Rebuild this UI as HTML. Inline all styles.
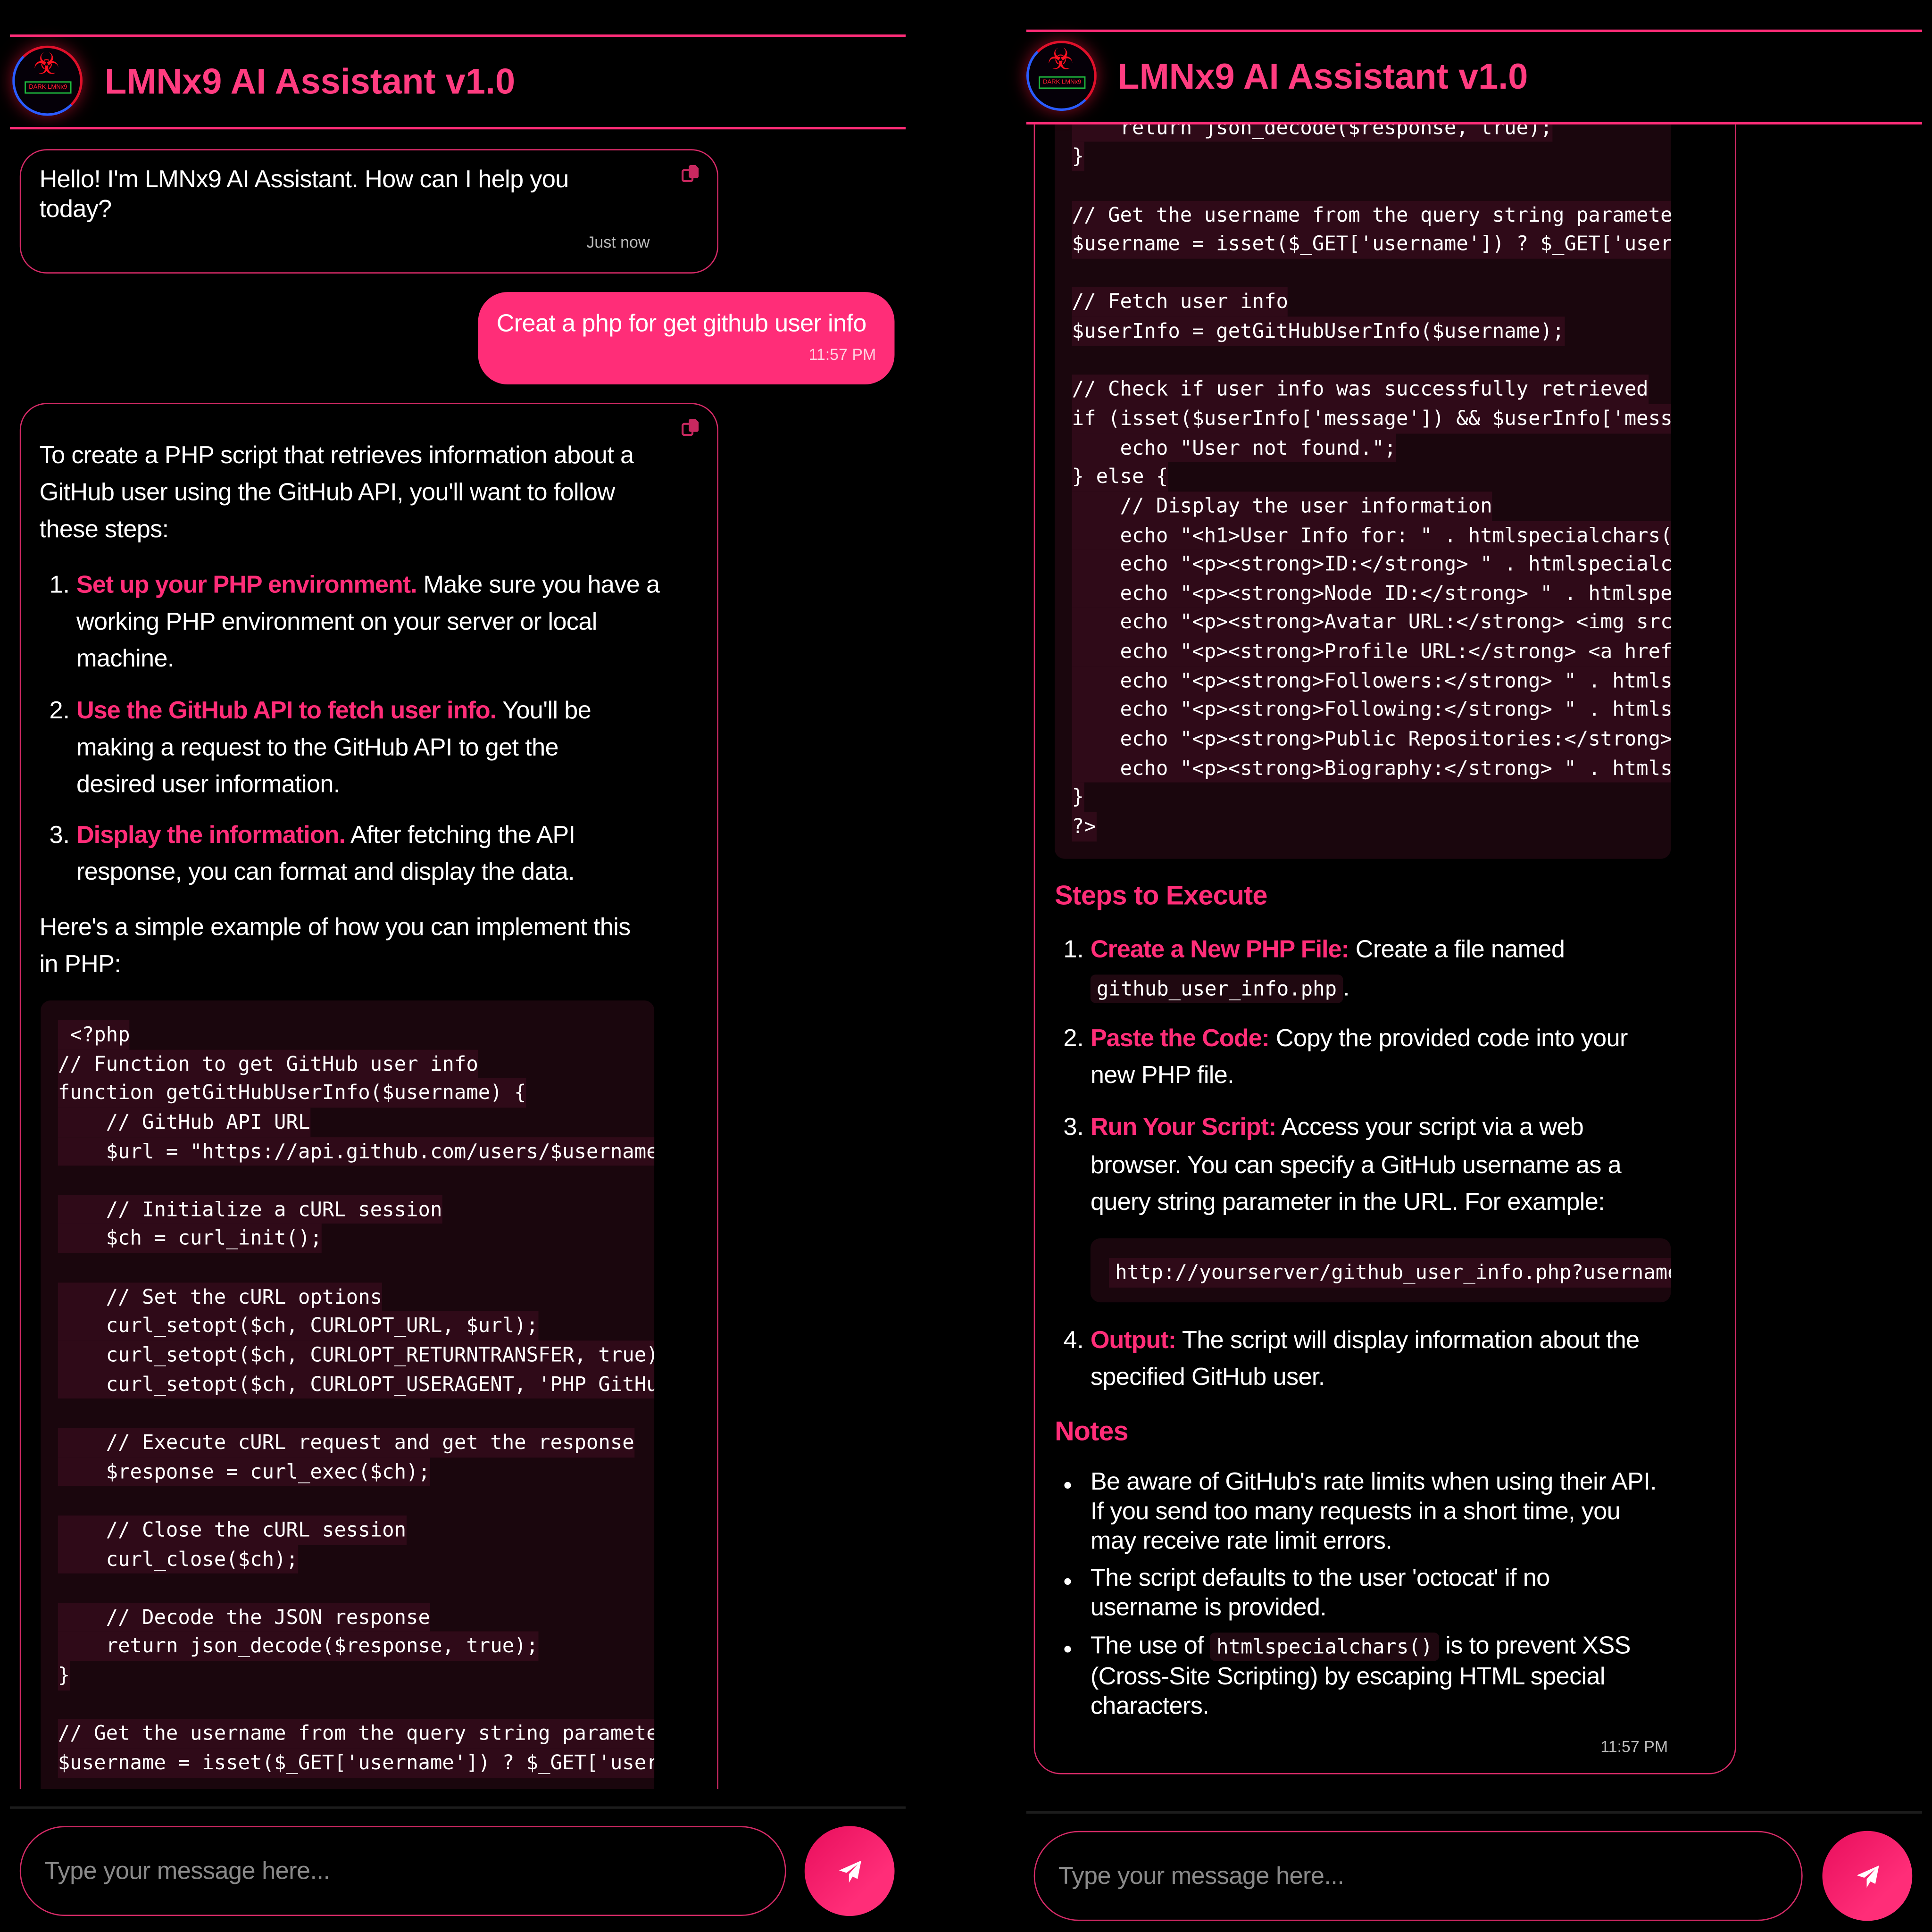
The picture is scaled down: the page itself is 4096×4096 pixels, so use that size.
<!DOCTYPE html>
<html><head><meta charset="utf-8">
<style>
*{margin:0;padding:0;box-sizing:border-box}
html,body{width:4096px;height:4096px;overflow:hidden;background:#000}
#w{position:absolute;left:0;top:0;width:1568px;height:1568px;transform:scale(2.6122449);transform-origin:0 0;font-family:"Liberation Sans",sans-serif;color:#fff}
.a{position:absolute}
.panel{position:absolute;top:0;width:727px;height:1568px}
.hdr{position:absolute;left:0;width:727px;height:77px;border-top:2px solid #ff2d78;border-bottom:2px solid #ff2d78;background:#000;z-index:5}
.logo{position:absolute;left:2px;top:7px;width:57px;height:57px;border-radius:50%;background:#050008;border:2px solid #e0102a;border-bottom-color:#2a5cff;border-left-color:#2a5cff;box-shadow:0 0 14px rgba(255,20,60,.55)}
.logo .bio{position:absolute;left:15px;top:0;font-size:24px;color:#ff1020;line-height:28px}
.logo .tg{position:absolute;left:8px;top:27px;width:38px;height:10px;border:1px solid #1fc040;font-size:5px;color:#ff2030;line-height:8px;text-align:center;white-space:nowrap;overflow:hidden}
.title{position:absolute;left:77px;font:bold 29px/36px "Liberation Sans",sans-serif;color:#ff3c80;white-space:nowrap}
.chat{position:absolute;left:0;width:727px;overflow:hidden}
.bub{position:absolute;border:1.3px solid #d42a66;border-radius:22px}
.t{position:absolute;font-size:20px;line-height:30px;white-space:nowrap;letter-spacing:-0.25px;color:#fff}
.pk{color:#ff2d78;font-weight:bold;letter-spacing:-0.4px}
.num{position:absolute;font-size:20px;line-height:30px}
.code{position:absolute;background:#1a060d;border-radius:8px;overflow:hidden;padding-left:14px}
.code div{height:23.65px;line-height:23.65px;font-family:"DejaVu Sans Mono","Liberation Mono",monospace;font-size:16.2px;white-space:pre;color:#fff}
.code span{background:#2f0a18;display:inline-block;height:23.65px}
.ic{font-family:"DejaVu Sans Mono","Liberation Mono",monospace;font-size:16.2px;background:#1f0810;padding:2px 5px;border-radius:4px;letter-spacing:0}
.tm{position:absolute;font-size:13px;color:#bbb;white-space:nowrap}
.copy{position:absolute;width:16px;height:16px}
.div{position:absolute;left:0;width:727px;height:2px;background:#1c1c1c}
.inp{position:absolute;left:8px;width:622px;height:73px;border:1.3px solid #d42a66;border-radius:37px}
.inp span{position:absolute;left:19px;top:21px;font-size:20px;line-height:30px;color:#8a8a8a;letter-spacing:-0.2px}
.send{position:absolute;width:73px;height:73px;border-radius:50%;background:linear-gradient(135deg,#e80e5c,#ff2d78 70%)}
.send svg{position:absolute;left:27px;top:27px}
.h{position:absolute;font:bold 22px/30px "Liberation Sans",sans-serif;color:#ff2d78;letter-spacing:-0.3px}
</style></head><body><div id="w">

<!-- LEFT PANEL -->
<div class="panel" style="left:8px">
  <div class="hdr" style="top:28px">
    <div class="logo"><div class="bio">☣</div><div class="tg">DARK LMNx9</div></div>
    <div class="title" style="top:19px">LMNx9 AI Assistant v1.0</div>
  </div>
  <div class="chat" style="top:107px;height:1345px">
    <div class="bub" style="left:8px;top:14px;width:567px;height:101px">
      <svg class="copy" style="left:536px;top:11px" viewBox="0 0 16 16"><rect x="1" y="5" width="8" height="9" rx="1.5" fill="none" stroke="#c8285f" stroke-width="1.6"/><path d="M6 2.5a1.5 1.5 0 0 1 1.5-1.5h4l2.5 2.5v6.5a1.5 1.5 0 0 1-1.5 1.5h-5A1.5 1.5 0 0 1 6 10z" fill="#c8285f"/></svg>
      <div class="t" style="left:15px;top:12px;line-height:24px">Hello! I'm LMNx9 AI Assistant. How can I help you<br>today?</div>
      <div class="tm" style="left:459px;top:67px">Just now</div>
    </div>
    <div class="a" style="left:380px;top:130px;width:338px;height:75px;background:#ff2d78;border-radius:24px">
      <div class="t" style="left:15px;top:11px">Creat a php for get github user info</div>
      <div class="tm" style="right:15px;top:43px;color:#ffd0e0">11:57 PM</div>
    </div>
    <div class="bub" style="left:8px;top:220px;width:567px;height:1300px">
      <svg class="copy" style="left:536px;top:11px" viewBox="0 0 16 16"><rect x="1" y="5" width="8" height="9" rx="1.5" fill="none" stroke="#c8285f" stroke-width="1.6"/><path d="M6 2.5a1.5 1.5 0 0 1 1.5-1.5h4l2.5 2.5v6.5a1.5 1.5 0 0 1-1.5 1.5h-5A1.5 1.5 0 0 1 6 10z" fill="#c8285f"/></svg>
    </div>
    <div class="t" style="left:24px;top:248px">To create a PHP script that retrieves information about a<br>GitHub user using the GitHub API, you'll want to follow<br>these steps:</div>
    <div class="num" style="left:32px;top:353px">1.</div>
    <div class="t" style="left:54px;top:353px"><span class="pk">Set up your PHP environment.</span> Make sure you have a<br>working PHP environment on your server or local<br>machine.</div>
    <div class="num" style="left:32px;top:455px">2.</div>
    <div class="t" style="left:54px;top:455px"><span class="pk">Use the GitHub API to fetch user info.</span> You'll be<br>making a request to the GitHub API to get the<br>desired user information.</div>
    <div class="num" style="left:32px;top:556px">3.</div>
    <div class="t" style="left:54px;top:556px"><span class="pk">Display the information.</span> After fetching the API<br>response, you can format and display the data.</div>
    <div class="t" style="left:24px;top:631px">Here's a simple example of how you can implement this<br>in PHP:</div>
    <div class="code" style="left:25px;top:705px;width:498px;height:700px;padding-top:16px">
<div><span> &lt;?php</span></div>
<div><span>// Function to get GitHub user info</span></div>
<div><span>function getGitHubUserInfo($username) {</span></div>
<div><span>    // GitHub API URL</span></div>
<div><span>    $url = "https://api.github.com/users/$username";</span></div>
<div></div>
<div><span>    // Initialize a cURL session</span></div>
<div><span>    $ch = curl_init();</span></div>
<div></div>
<div><span>    // Set the cURL options</span></div>
<div><span>    curl_setopt($ch, CURLOPT_URL, $url);</span></div>
<div><span>    curl_setopt($ch, CURLOPT_RETURNTRANSFER, true);</span></div>
<div><span>    curl_setopt($ch, CURLOPT_USERAGENT, 'PHP GitHub User Info');</span></div>
<div></div>
<div><span>    // Execute cURL request and get the response</span></div>
<div><span>    $response = curl_exec($ch);</span></div>
<div></div>
<div><span>    // Close the cURL session</span></div>
<div><span>    curl_close($ch);</span></div>
<div></div>
<div><span>    // Decode the JSON response</span></div>
<div><span>    return json_decode($response, true);</span></div>
<div><span>}</span></div>
<div></div>
<div><span>// Get the username from the query string parameter</span></div>
<div><span>$username = isset($_GET['username']) ? $_GET['username'] : 'octocat';</span></div>
    </div>
  </div>
  <div class="div" style="top:1466px"></div>
  <div class="inp" style="top:1482px"><span>Type your message here...</span></div>
  <div class="send" style="left:645px;top:1482px"><svg width="20" height="20" viewBox="0 0 20 20"><path d="M19 1 L1 9 L7 11 L16 4 L9 12 L9 19 L12 14 L16 16 Z" fill="#fff"/></svg></div>
</div>

<!-- RIGHT PANEL -->
<div class="panel" style="left:833px">
  <div class="hdr" style="top:24px">
    <div class="logo" style="left:0px;top:7px"><div class="bio">☣</div><div class="tg">DARK LMNx9</div></div>
    <div class="title" style="left:74px;top:19px">LMNx9 AI Assistant v1.0</div>
  </div>
  <div class="chat" style="top:101px;height:1357px"><div class="a" style="left:0;top:-101px;width:727px;height:1458px">
    <div class="bub" style="left:6px;top:-300px;width:570px;height:1740px"></div>
    <div class="code" style="left:23px;top:60px;width:500px;height:637px;padding-top:31.6px">
<div><span>    return json_decode($response, true);</span></div>
<div><span>}</span></div>
<div></div>
<div><span>// Get the username from the query string parameter</span></div>
<div><span>$username = isset($_GET['username']) ? $_GET['username'] : 'octocat';</span></div>
<div></div>
<div><span>// Fetch user info</span></div>
<div><span>$userInfo = getGitHubUserInfo($username);</span></div>
<div></div>
<div><span>// Check if user info was successfully retrieved</span></div>
<div><span>if (isset($userInfo['message']) &amp;&amp; $userInfo['message'] == 'Not Found') {</span></div>
<div><span>    echo "User not found.";</span></div>
<div><span>} else {</span></div>
<div><span>    // Display the user information</span></div>
<div><span>    echo "&lt;h1&gt;User Info for: " . htmlspecialchars($userInfo['login']) . "&lt;/h1&gt;";</span></div>
<div><span>    echo "&lt;p&gt;&lt;strong&gt;ID:&lt;/strong&gt; " . htmlspecialchars($userInfo['id']) . "&lt;/p&gt;";</span></div>
<div><span>    echo "&lt;p&gt;&lt;strong&gt;Node ID:&lt;/strong&gt; " . htmlspecialchars($userInfo['node_id']);</span></div>
<div><span>    echo "&lt;p&gt;&lt;strong&gt;Avatar URL:&lt;/strong&gt; &lt;img src='" . htmlspecialchars();</span></div>
<div><span>    echo "&lt;p&gt;&lt;strong&gt;Profile URL:&lt;/strong&gt; &lt;a href='" . htmlspecialchars();</span></div>
<div><span>    echo "&lt;p&gt;&lt;strong&gt;Followers:&lt;/strong&gt; " . htmlspecialchars($userInfo);</span></div>
<div><span>    echo "&lt;p&gt;&lt;strong&gt;Following:&lt;/strong&gt; " . htmlspecialchars($userInfo);</span></div>
<div><span>    echo "&lt;p&gt;&lt;strong&gt;Public Repositories:&lt;/strong&gt; " . htmlspecialchars();</span></div>
<div><span>    echo "&lt;p&gt;&lt;strong&gt;Biography:&lt;/strong&gt; " . htmlspecialchars($userInfo);</span></div>
<div><span>}</span></div>
<div><span>?&gt;</span></div>
    </div>
    <div class="h" style="left:23px;top:712px">Steps to Execute</div>
    <div class="num" style="left:30px;top:756px">1.</div>
    <div class="t" style="left:52px;top:756px;line-height:31px"><span class="pk">Create a New PHP File:</span> Create a file named<br><span class="ic">github_user_info.php</span>.</div>
    <div class="num" style="left:30px;top:828px">2.</div>
    <div class="t" style="left:52px;top:828px"><span class="pk">Paste the Code:</span> Copy the provided code into your<br>new PHP file.</div>
    <div class="num" style="left:30px;top:900px">3.</div>
    <div class="t" style="left:52px;top:900px;line-height:30.5px"><span class="pk">Run Your Script:</span> Access your script via a web<br>browser. You can specify a GitHub username as a<br>query string parameter in the URL. For example:</div>
    <div class="code" style="left:52px;top:1005px;width:471px;height:52px;padding-left:15px;padding-top:16px"><div><span style="padding-left:5px">http://yourserver/github_user_info.php?username=octocat</span></div></div>
    <div class="num" style="left:30px;top:1073px">4.</div>
    <div class="t" style="left:52px;top:1073px"><span class="pk">Output:</span> The script will display information about the<br>specified GitHub user.</div>
    <div class="h" style="left:23px;top:1147px">Notes</div>
    <div class="num" style="left:30px;top:1191px">•</div>
    <div class="t" style="left:52px;top:1191px;line-height:24px">Be aware of GitHub's rate limits when using their API.<br>If you send too many requests in a short time, you<br>may receive rate limit errors.</div>
    <div class="num" style="left:30px;top:1269px">•</div>
    <div class="t" style="left:52px;top:1269px;line-height:24px">The script defaults to the user 'octocat' if no<br>username is provided.</div>
    <div class="num" style="left:30px;top:1324px">•</div>
    <div class="t" style="left:52px;top:1324px;line-height:24px">The use of <span class="ic">htmlspecialchars()</span> is to prevent XSS<br>(Cross-Site Scripting) by escaping HTML special<br>characters.</div>
    <div class="tm" style="left:466px;top:1410px">11:57 PM</div>
  </div></div>
  <div class="div" style="top:1470px"></div>
  <div class="inp" style="left:6px;top:1486px;width:624px"><span>Type your message here...</span></div>
  <div class="send" style="left:646px;top:1486px"><svg width="20" height="20" viewBox="0 0 20 20"><path d="M19 1 L1 9 L7 11 L16 4 L9 12 L9 19 L12 14 L16 16 Z" fill="#fff"/></svg></div>
</div>

</div></body></html>
